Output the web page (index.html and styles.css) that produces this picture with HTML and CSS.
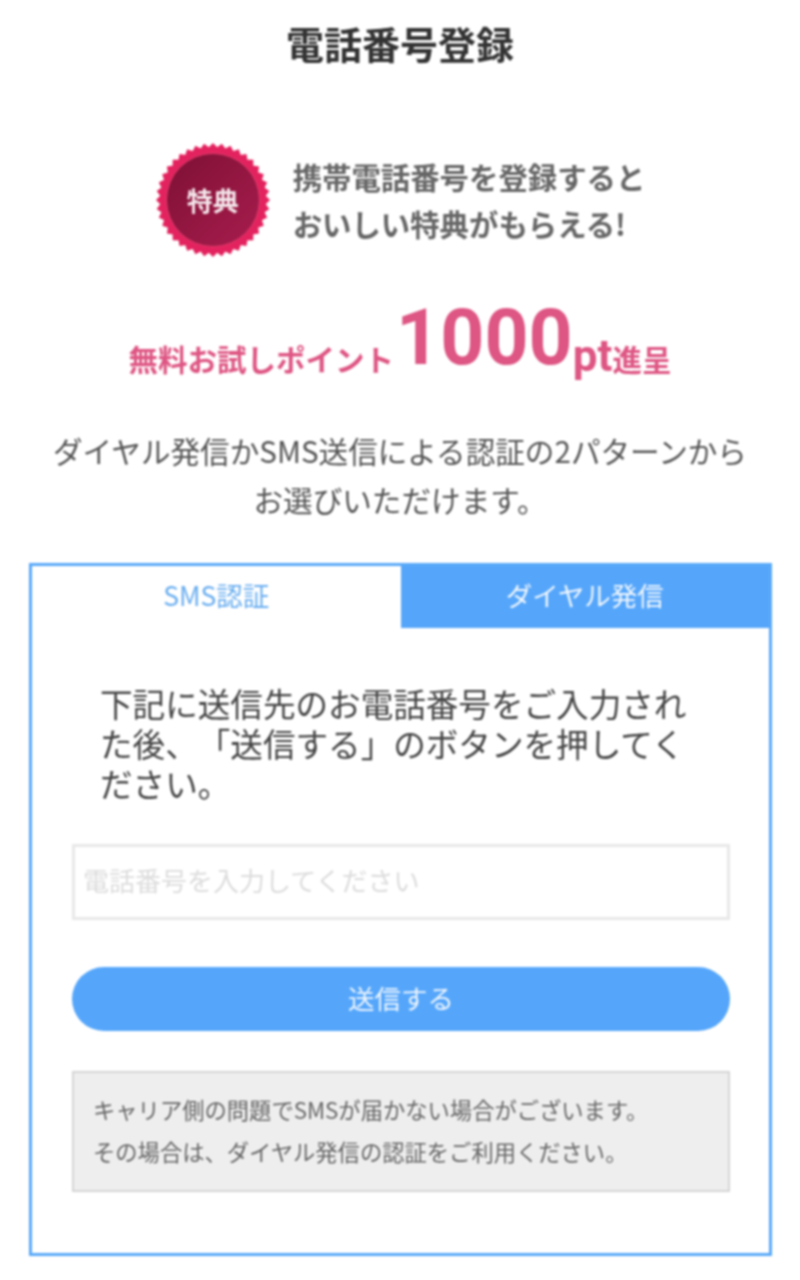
FILE: index.html
```html
<!DOCTYPE html>
<html lang="ja">
<head>
  <meta charset="UTF-8" />
  <meta name="viewport" content="width=device-width, initial-scale=1.0">
  <title>電話番号登録</title>
  <link rel="stylesheet" href="styles.css">
</head>
<body>

  <h1 class="title">電話番号登録</h1>

  <div class="perk">
    <div class="badge">
      <svg class="badge-seal" viewBox="0 0 116 116" aria-hidden="true">
        <defs>
          <linearGradient id="sealFill" x1="0" y1="0" x2="1" y2="1">
            <stop offset="0" stop-color="#7d1034" />
            <stop offset="1" stop-color="#a81d4e" />
          </linearGradient>
        </defs>
        <g fill="#e3235f">
          <rect x="17.7" y="17.7" width="80.6" height="80.6" />
          <rect x="17.7" y="17.7" width="80.6" height="80.6" transform="rotate(9 58 58)" />
          <rect x="17.7" y="17.7" width="80.6" height="80.6" transform="rotate(18 58 58)" />
          <rect x="17.7" y="17.7" width="80.6" height="80.6" transform="rotate(27 58 58)" />
          <rect x="17.7" y="17.7" width="80.6" height="80.6" transform="rotate(36 58 58)" />
          <rect x="17.7" y="17.7" width="80.6" height="80.6" transform="rotate(45 58 58)" />
          <rect x="17.7" y="17.7" width="80.6" height="80.6" transform="rotate(54 58 58)" />
          <rect x="17.7" y="17.7" width="80.6" height="80.6" transform="rotate(63 58 58)" />
          <rect x="17.7" y="17.7" width="80.6" height="80.6" transform="rotate(72 58 58)" />
          <rect x="17.7" y="17.7" width="80.6" height="80.6" transform="rotate(81 58 58)" />
        </g>
        <circle cx="58" cy="58" r="46.5" fill="url(#sealFill)" stroke="#e03a6c" stroke-width="1" />
      </svg>
      <span class="badge-text">特典</span>
    </div>
    <p class="perk-text">携帯電話番号を登録すると<br>おいしい特典がもらえる!</p>
  </div>

  <p class="points">
    <span class="points-label">無料お試しポイント</span><span class="points-num">1000</span><span class="points-unit">pt</span><span class="points-label">進呈</span>
  </p>

  <p class="lead">ダイヤル発信かSMS送信による認証の2パターンから<br>お選びいただけます。</p>

  <div class="panel">
    <div class="tabs">
      <a class="tab active">SMS認証</a>
      <a class="tab">ダイヤル発信</a>
    </div>
    <div class="panel-body">
      <p class="guide">下記に送信先のお電話番号をご入力された後、「送信する」のボタンを押してください。</p>
      <input class="phone" type="text" placeholder="電話番号を入力してください">
      <button class="send" type="button">送信する</button>
      <div class="note">
        <p>キャリア側の問題でSMSが届かない場合がございます。</p>
        <p>その場合は、ダイヤル発信の認証をご利用ください。</p>
      </div>
    </div>
  </div>

</body>
</html>
```

FILE: styles.css
```css
* {
  margin: 0;
  padding: 0;
  box-sizing: border-box;
}

html, body {
  height: 100%;
  background: #fff;
  overflow: hidden;
}

body {
  font-family: "Noto Sans CJK JP", "Liberation Sans", sans-serif;
  color: #555;
  padding-top: 18px;
  text-spacing-trim: space-all; /* 約物を全角のまま */
  filter: blur(0.9px);
}

.title {
  font-size: 38px;
  line-height: 50px;
  font-weight: 700;
  color: #333;
  text-align: center;
}

.perk {
  display: flex;
  justify-content: center;
  align-items: center;
  gap: 22px;
  margin-top: 74px;
}

.badge {
  display: grid;
  place-items: center;
  width: 116px;
  height: 116px;
}

.badge-seal,
.badge-text {
  grid-area: 1 / 1;
}

.badge-seal {
  width: 116px;
  height: 116px;
}

.badge-text {
  font-size: 26px;
  line-height: 30px;
  font-weight: 700;
  color: #f4e6ea;
  z-index: 1;
}

.perk-text {
  font-size: 29.4px;
  line-height: 47px;
  font-weight: 700;
  color: #666;
}

.points {
  margin-top: 32px;
  height: 96px;
  line-height: 96px;
  color: #de5683;
  font-weight: 700;
  text-align: center;
  white-space: nowrap;
}

.points-label {
  font-size: 29.5px;
}

.points-num {
  font-family: Roboto, sans-serif;
  font-size: 77px;
  margin-left: 2px;
  vertical-align: 7px;
}

.points-unit {
  font-family: Roboto, sans-serif;
  font-size: 44px;
}

.lead {
  font-size: 29.6px;
  line-height: 49px;
  text-align: center;
  margin-top: 40px;
}

.panel {
  width: 743px;
  height: 693px;
  margin: 39px 0 0 29px;
  border: 3px solid #5aa9f8;
}

.tabs {
  display: flex;
  height: 62px;
}

.tab {
  flex: 1;
  display: flex;
  justify-content: center;
  align-items: center;
  font-size: 26.5px;
  padding-bottom: 5px;
  background: #55a6fb;
  color: #f2f7fd;
}

.tab.active {
  background: #fff;
  color: #6aaef0;
}

.panel-body {
  padding: 55px 40px 0;
}

.guide {
  font-size: 32.6px;
  line-height: 40px;
  color: #444;
  padding: 0 14px 0 28px;
}

.phone {
  display: block;
  width: 658px;
  height: 76px;
  margin-top: 41px;
  padding: 0 8px 5px;
  border: 3px solid #e8e8e8;
  font-family: inherit;
  font-size: 26px;
  outline: none;
}

.phone::placeholder {
  color: #dcdcdc;
}

.send {
  display: block;
  width: 658px;
  height: 64px;
  margin-top: 47px;
  padding-bottom: 4px;
  border: none;
  border-radius: 32px;
  background: #55a6fb;
  color: #eef5fd;
  font-family: inherit;
  font-size: 26.5px;
}

.note {
  width: 658px;
  height: 121px;
  margin-top: 40px;
  padding: 15px 19px 0;
  background: #eeeeee;
  border: 2px solid #d5d5d5;
  font-size: 22.3px;
  line-height: 42px;
  color: #666;
}
```
